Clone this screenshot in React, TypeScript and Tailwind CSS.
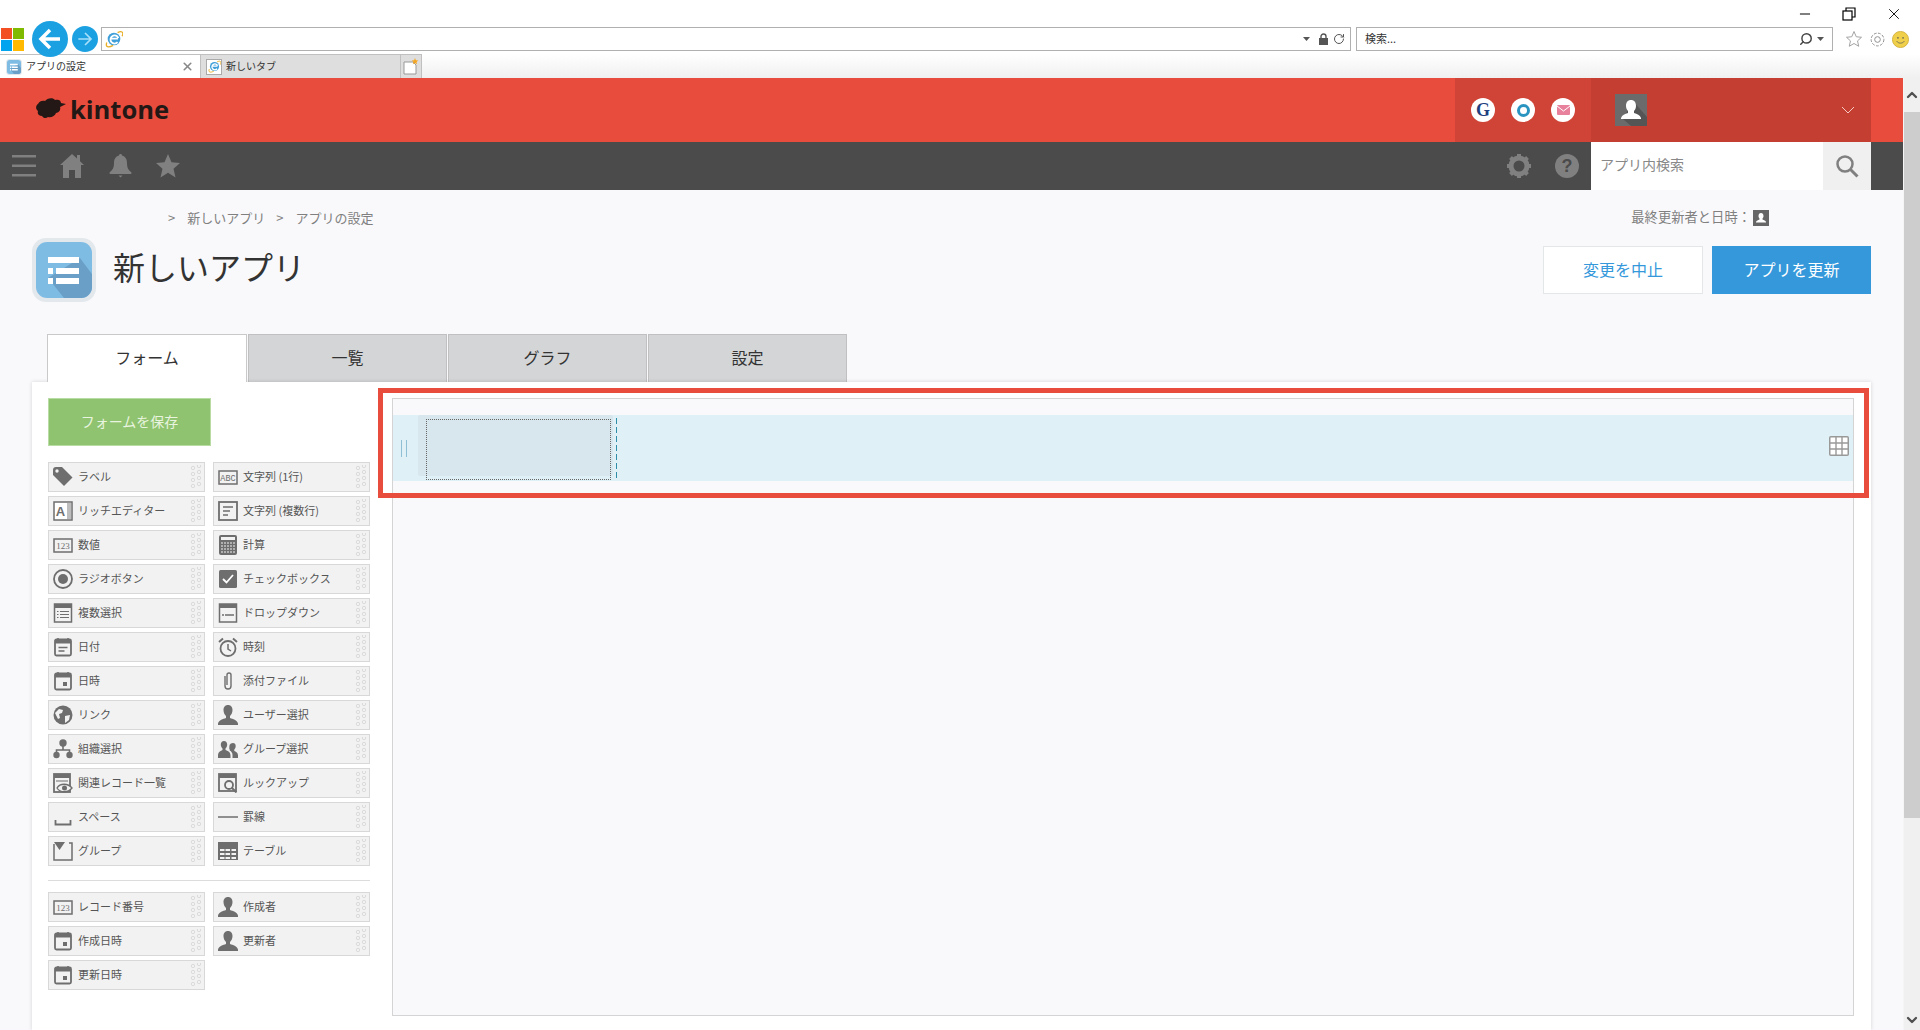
import React from 'react';
import { ChevronDown, ChevronUp, RotateCw, Search, X, Minus } from 'lucide-react';

const GRAY = '#6e6e6e';

const Ic: React.FC<{ name: string }> = ({ name }) => {
  const body = () => {
    switch (name) {
      case 'tag':
        return <><path d="M0 3a3 3 0 0 1 3-3h6l10.500 10.500-8.500 8.500L0 8z" fill={GRAY} transform="translate(0 0)" /><circle cx="4" cy="4" r="1.700" fill="#f2f2f2" /></>;
      case 'abc':
        return <><rect x="1" y="4" width="18" height="13" fill="#f2f2f2" stroke={GRAY} strokeWidth="1.500" /><text x="10" y="14" textAnchor="middle" fontSize="8.500" fontFamily="Liberation Mono" fill={GRAY}>ABC</text></>;
      case 'num':
        return <><rect x="1" y="4" width="18" height="13" fill="#f2f2f2" stroke={GRAY} strokeWidth="1.500" /><text x="10" y="14" textAnchor="middle" fontSize="9" fontFamily="Liberation Serif" fill={GRAY}>123</text></>;
      case 'rich':
        return <><rect x="1" y="1" width="18" height="18" fill="#fff" stroke={GRAY} strokeWidth="1.500" /><rect x="14" y="2" width="4" height="16" fill="#bdbdbd" /><text x="7.500" y="15" textAnchor="middle" fontSize="13" fontWeight="700" fontFamily="Liberation Sans" fill={GRAY}>A</text></>;
      case 'multi':
        return <><rect x="1" y="1" width="18" height="18" fill="#f2f2f2" stroke={GRAY} strokeWidth="1.800" /><path d="M5 6h10M5 10h7M5 14h5" stroke={GRAY} strokeWidth="1.500" /></>;
      case 'calc':
        return <><rect x="1" y="0" width="18" height="20" rx="2" fill={GRAY} /><rect x="3" y="2" width="14" height="3" fill="#f2f2f2" /><path d="M3 8h14M3 11h14M3 14h14M3 17h14" stroke="#f2f2f2" strokeWidth="1.200" strokeDasharray="2 1" /></>;
      case 'radio':
        return <><circle cx="10" cy="10" r="9" fill="#f2f2f2" stroke={GRAY} strokeWidth="1.800" /><circle cx="10" cy="10" r="5" fill={GRAY} /></>;
      case 'check':
        return <><rect x="1" y="1" width="18" height="18" rx="1.500" fill={GRAY} /><path d="M5 10l3.500 3.500L15 6" fill="none" stroke="#fff" strokeWidth="1.800" /></>;
      case 'mselect':
        return <><rect x="1.500" y="1" width="17" height="18" fill="#f2f2f2" stroke={GRAY} strokeWidth="1.500" /><rect x="1.500" y="1" width="17" height="4" fill={GRAY} /><path d="M4 8.500h1.500M7 8.500h9M4 11.500h1.500M7 11.500h9M4 14.500h1.500M7 14.500h9" stroke={GRAY} strokeWidth="1.200" /></>;
      case 'dropdown':
        return <><rect x="1.500" y="1" width="17" height="18" fill="#f2f2f2" stroke={GRAY} strokeWidth="1.500" /><rect x="1.500" y="1" width="17" height="4" fill={GRAY} /><path d="M4 12h2M7 12h9" stroke={GRAY} strokeWidth="1.500" /></>;
      case 'date':
        return <><rect x="2" y="2.500" width="16" height="16" rx="1.500" fill="#f2f2f2" stroke={GRAY} strokeWidth="1.800" /><path d="M2 3h16v3.500H2z" fill={GRAY} /><path d="M5 1v3M15 1v3" stroke={GRAY} strokeWidth="1.500" /><path d="M5.500 10.500h9M5.500 14h6" stroke={GRAY} strokeWidth="1.500" /></>;
      case 'datetime':
        return <><rect x="2" y="2.500" width="16" height="16" rx="1.500" fill="#f2f2f2" stroke={GRAY} strokeWidth="1.800" /><path d="M2 3h16v3.500H2z" fill={GRAY} /><path d="M5 1v3M15 1v3" stroke={GRAY} strokeWidth="1.500" /><rect x="10" y="11" width="4" height="4" fill={GRAY} /></>;
      case 'clock':
        return <><circle cx="10" cy="11.500" r="7.500" fill="#f2f2f2" stroke={GRAY} strokeWidth="1.800" /><path d="M10 7v5l3 2" fill="none" stroke={GRAY} strokeWidth="1.500" /><path d="M1 5l4-3.500M19 5l-4-3.500" stroke={GRAY} strokeWidth="2" /></>;
      case 'clip':
        return <path d="M7 5v10a3 3 0 0 0 6 0V4a2 2 0 0 0-4 0v10" fill="none" stroke={GRAY} strokeWidth="1.400" />;
      case 'globe':
        return <><circle cx="10" cy="10" r="9.500" fill={GRAY} /><path d="M2 8l4-4 4 1-1 3-3 1 1 4-2 1zM12 11l5-1-1 5-4 3z" fill="#f2f2f2" /></>;
      case 'user':
        return <path d="M10 0c3 0 4.500 2.300 4.500 5 0 2.500-1 4.500-2.500 6v2c3 1 7 2 8 5.500V20H0v-1.500C1 15 5 14 8 13v-2C6.500 9.500 5.500 7.500 5.500 5 5.500 2.300 7 0 10 0z" fill={GRAY} />;
      case 'org':
        return <><circle cx="10" cy="4" r="3.700" fill={GRAY} /><circle cx="3.500" cy="16" r="3.200" fill={GRAY} /><circle cx="16.500" cy="16" r="3.200" fill={GRAY} /><path d="M10 7v4M3.500 14v-3h13v3" fill="none" stroke={GRAY} strokeWidth="1.600" /></>;
      case 'group':
        return <><path d="M6 2c2 0 3.200 1.500 3.200 3.600 0 1.800-.7 3-1.700 4v1.400c2 .8 4.500 1.500 5 5V19H0v-3c.5-3.500 3-4.200 4.500-5V9.600c-1-1-1.700-2.200-1.700-4C2.800 3.500 4 2 6 2z" fill={GRAY} /><path d="M15 4c1.700 0 2.700 1.300 2.700 3 0 1.500-.6 2.600-1.400 3.500V12c1.500.6 3.300 1.200 3.700 4v3h-5.500v-3c0-2-1-3.500-2.800-4.500V10.500C11 9.600 11.400 8.500 11.400 7 11.400 5.300 13.300 4 15 4z" fill={GRAY} /></>;
      case 'related':
        return <><rect x="1" y="1" width="16" height="18" fill="#f2f2f2" stroke={GRAY} strokeWidth="1.800" /><rect x="1" y="1" width="16" height="4" fill={GRAY} /><path d="M3 8h12" stroke={GRAY} strokeWidth="1" /><path d="M4 15c3-5 11-5 15 0-4 5-12 5-15 0z" fill="#f2f2f2" stroke={GRAY} strokeWidth="1.300" /><circle cx="11.500" cy="15" r="2.500" fill={GRAY} /></>;
      case 'lookup':
        return <><rect x="1" y="1" width="17" height="17" fill="#f2f2f2" stroke={GRAY} strokeWidth="1.800" /><rect x="1" y="1" width="17" height="4" fill={GRAY} /><circle cx="11" cy="12" r="4" fill="#f2f2f2" stroke={GRAY} strokeWidth="1.800" /><path d="M14 15l4.500 4.500" stroke={GRAY} strokeWidth="2" /></>;
      case 'space':
        return <path d="M2.500 13v4.500h15V13" fill="none" stroke={GRAY} strokeWidth="1.800" />;
      case 'line':
        return <path d="M0 10h20" stroke={GRAY} strokeWidth="1.500" />;
      case 'groupbox':
        return <><path d="M1 3v16h18V2h-3" fill="none" stroke={GRAY} strokeWidth="1.500" /><path d="M1 1h11l-5.500 8z" fill={GRAY} /></>;
      case 'table':
        return <><rect x="0" y="1" width="20" height="18" fill={GRAY} /><path d="M2 8h4.500v2H2zM7.500 8H12v2H7.500zM13.500 8H18v2h-4.500zM2 12h4.500v2H2zM7.500 12H12v2H7.500zM13.500 12H18v2h-4.500zM2 16h4.500v2H2zM7.500 16H12v2H7.500zM13.500 16H18v2h-4.500z" fill="#f2f2f2" /></>;
      default:
        return null;
    }
  };
  return <svg viewBox="0 0 20 20" className="w-5 h-5 shrink-0">{body()}</svg>;
};

const DragDots = () => (
  <svg width="12" height="24" viewBox="0 0 12 24" className="ml-auto mr-[2px] shrink-0">
    {[3, 9, 15, 21].map(y => <circle key={y} cx="3" cy={y} r="1.700" fill="none" stroke="#d4d4d4" strokeWidth="0.800" />)}
    {[1, 7, 13, 19].map(y => <circle key={y} cx="9" cy={y} r="1.700" fill="none" stroke="#d4d4d4" strokeWidth="0.800" />)}
  </svg>
);

const Field: React.FC<{ icon: string; label: string }> = ({ icon, label }) => (
  <div className="h-[30px] w-[157px] flex items-center pl-[4px] bg-[#f2f2f2] border border-[#d8d8d8] text-[11px] text-[#555] whitespace-nowrap">
    <Ic name={icon} />
    <span className="ml-[5px] -mt-[2px]">{label}</span>
    <DragDots />
  </div>
);

const fields = [
  ['tag', 'ラベル'], ['abc', '文字列 (1行)'],
  ['rich', 'リッチエディター'], ['multi', '文字列 (複数行)'],
  ['num', '数値'], ['calc', '計算'],
  ['radio', 'ラジオボタン'], ['check', 'チェックボックス'],
  ['mselect', '複数選択'], ['dropdown', 'ドロップダウン'],
  ['date', '日付'], ['clock', '時刻'],
  ['datetime', '日時'], ['clip', '添付ファイル'],
  ['globe', 'リンク'], ['user', 'ユーザー選択'],
  ['org', '組織選択'], ['group', 'グループ選択'],
  ['related', '関連レコード一覧'], ['lookup', 'ルックアップ'],
  ['space', 'スペース'], ['line', '罫線'],
  ['groupbox', 'グループ'], ['table', 'テーブル'],
];

const sysFields = [
  ['num', 'レコード番号'], ['user', '作成者'],
  ['datetime', '作成日時'], ['user', '更新者'],
  ['datetime', '更新日時'],
];

const IeLogo: React.FC<{ size: number }> = ({ size }) => (
  <svg width={size} height={size} viewBox="0 0 20 20">
    <circle cx="10" cy="10" r="7" fill="#3f9fd8" />
    <path d="M5.500 9.500h9M14 13.500a4.500 4.500 0 1 1 .8-4.500" fill="none" stroke="#fff" strokeWidth="2" />
    <path d="M2 14C0 19 4 20 9 17M14 3c5-3 7 0 5 4" fill="none" stroke="#e8b02a" strokeWidth="1.500" />
  </svg>
);

const AppIcon: React.FC<{ size: number }> = ({ size }) => (
  <svg width={size} height={size} viewBox="0 0 64 64">
    <rect x="0" y="0" width="64" height="64" rx="14" fill="#e3e8ec" />
    <rect x="4" y="4" width="56" height="56" rx="11" fill="#7fbce4" />
    <path d="M16 40L48 20l12 16v13a11 11 0 0 1-11 11H32z" fill="#6aa0c8" />
    <path d="M16 19h31v6H16zM16 30h5v6h-5zM24 30h23v6H24zM16 40h5v6h-5zM24 40h23v6H24z" fill="#fff" />
  </svg>
);

export default function App() {
  return (
    <div className="w-[1920px] h-[1030px] overflow-hidden flex flex-col bg-white font-['Noto_Sans_CJK_JP','Noto_Sans',sans-serif]">
      {/* browser chrome */}
      <div className="h-[78px] shrink-0 flex flex-col bg-white">
        <div className="h-[27px] flex items-center justify-end pr-[17px] gap-[29px] text-black">
          <Minus className="w-4 h-4" strokeWidth={1.500} />
          <svg width="14" height="14" viewBox="0 0 14 14" fill="none" stroke="#000" strokeWidth="1.200"><rect x="1" y="4" width="9" height="9" /><path d="M4 4V1h9v9h-3" /></svg>
          <X className="w-[18px] h-[18px]" strokeWidth={1.200} />
        </div>
        <div className="h-[24px] flex items-center">
          <div className="ml-px w-[23px] h-[23px] grid grid-cols-2 gap-px shrink-0">
            <div className="bg-[#f25022]" />
            <div className="bg-[#7fba00]" />
            <div className="bg-[#00a4ef]" />
            <div className="bg-[#ffb900]" />
          </div>
          <div className="ml-[8px] w-9 h-9 -mt-px rounded-full bg-[#1ba1e2] flex items-center justify-center shrink-0 z-10">
            <svg width="24" height="24" viewBox="0 0 24 24" fill="none" stroke="#fff" strokeWidth="3.500"><path d="M22 12H4M12 3l-9 9 9 9" /></svg>
          </div>
          <div className="ml-[4px] w-[26px] h-[26px] rounded-full bg-[#1ba1e2] flex items-center justify-center shrink-0">
            <svg width="16" height="16" viewBox="0 0 24 24" fill="none" stroke="#a8e0fa" strokeWidth="2.500"><path d="M2 12h19M12 3l9 9-9 9" /></svg>
          </div>
          <div className="ml-[3px] w-[1250px] h-[24px] border border-[#b0b0b0] flex items-center pl-[3px] pr-[5px] shrink-0">
            <IeLogo size={18} />
            <svg className="ml-auto" width="7" height="4" viewBox="0 0 7 4"><path d="M0 0h7L3.500 4z" fill="#555" /></svg>
            <svg className="ml-[8px]" width="11" height="12" viewBox="0 0 11 12"><path d="M3 5V3.500a2.500 2.500 0 0 1 5 0V5" fill="none" stroke="#555" strokeWidth="1.400" /><rect x="1" y="5" width="9" height="7" fill="#555" /></svg>
            <RotateCw className="ml-[4px] w-3 h-3 text-[#555]" />
          </div>
          <div className="ml-[5px] w-[477px] h-[24px] border border-[#b0b0b0] flex items-center pl-[8px] pr-[8px] text-[11px] text-[#333] shrink-0">
            <span className="-mt-[2px]">検索...</span>
            <Search className="ml-auto w-[14px] h-[14px] text-[#444] -scale-x-100" strokeWidth={2.500} />
            <svg className="ml-[4px]" width="7" height="4" viewBox="0 0 7 4"><path d="M0 0h7L3.500 4z" fill="#555" /></svg>
          </div>
          <svg className="ml-[12px] shrink-0" width="18" height="18" viewBox="0 0 24 24" fill="none" stroke="#a0a0a0" strokeWidth="1.300"><path d="M12 2l3 7 7 .7-5.300 4.800 1.600 7.200L12 18l-6.300 3.700 1.600-7.200L2 9.700 9 9z" /></svg>
          <svg className="ml-[6px] shrink-0" width="17" height="17" viewBox="0 0 24 24" fill="none" stroke="#909090" strokeWidth="1.400"><circle cx="12" cy="12" r="4" /><circle cx="12" cy="12" r="9" strokeDasharray="4 2" /></svg>
          <svg className="ml-[6px] shrink-0" width="17" height="17" viewBox="0 0 20 20"><circle cx="10" cy="10" r="9.500" fill="#f0cf4a" stroke="#d0ae38" /><circle cx="7" cy="8" r="1" fill="#665" /><circle cx="13" cy="8" r="1" fill="#665" /><path d="M5.500 12c2 3 7 3 9 0" fill="none" stroke="#665" /></svg>
        </div>
        <div className="mt-[3px] h-[24px] flex text-[10px] text-[#333] bg-gradient-to-b from-white to-[#f0f0f0]">
          <div className="w-[200px] bg-white border-t border-[#c0c0c0] flex items-center pl-[6px] pr-[6px]">
            <AppIcon size={16} />
            <span className="ml-[4px] -mt-[2px]">アプリの設定</span>
            <X className="ml-auto w-[13px] h-[13px] text-[#888]" strokeWidth={3} />
          </div>
          <div className="w-[200px] bg-[#dedede] border-t border-l border-[#c0c0c0] flex items-center pl-[5px]">
            <div className="w-[16px] h-[16px] bg-white border border-[#aaa] flex items-center justify-center"><IeLogo size={13} /></div>
            <span className="ml-[4px] -mt-[2px]">新しいタブ</span>
          </div>
          <div className="w-[22px] bg-[#dedede] border-t border-x border-[#c0c0c0] flex items-center justify-center">
            <svg width="16" height="17" viewBox="0 0 16 17"><path d="M1 4h9l3 3v9H1z" fill="#fff" stroke="#999" /><path d="M12 0l.9 2.300 2.400.2-1.800 1.500.6 2.300-2.100-1.300-2.100 1.300.6-2.300-1.800-1.500 2.400-.2z" fill="#f5a623" /></svg>
          </div>
        </div>
      </div>

      <div className="flex-1 flex min-h-0">
        <div className="w-[1903px] flex flex-col bg-[#f9f9fb] min-h-0">
          {/* kintone header */}
          <div className="h-[64px] shrink-0 bg-[#e74c3c] flex items-center pl-[35px] pr-[32px]">
            <svg width="31" height="24" viewBox="0 0 31 24" className="shrink-0">
              <path d="M3 6c1-3 5-4 7-3 2-3 8-4 10-1 3-1 6 0 6 3l5 1-6 3c1 3-1 6-4 6-1 3-5 5-8 4-2 2-5 1-6-1-3 0-5-2-4-5-3-2-2-6 0-7z" fill="#231815" />
            </svg>
            <span className="ml-[4px] font-['Open_Sans'] font-bold text-[25.5px] leading-none text-[#231815]">kintone</span>
            <div className="ml-auto w-[136px] h-full bg-[#cf4436] flex items-center pl-[16px] gap-[16px]">
              <div className="w-6 h-6 rounded-full bg-white flex items-center justify-center font-['Liberation_Serif'] font-bold text-[18px] text-[#1f3f7f]">G</div>
              <div className="w-6 h-6 rounded-full bg-white flex items-center justify-center">
                <div className="w-[13px] h-[13px] rounded-full border-[3px] border-[#2a94c0]" />
              </div>
              <div className="w-6 h-6 rounded-full bg-white flex items-center justify-center">
                <svg width="13" height="10" viewBox="0 0 13 10"><rect width="13" height="10" rx="1" fill="#e8819c" /><path d="M0 1l6.500 5L13 1" fill="none" stroke="#fff" /></svg>
              </div>
            </div>
            <div className="w-[280px] h-full bg-[#c43f31] flex items-center pl-[24px] pr-[16px]">
              <svg width="32" height="32" viewBox="0 0 32 32">
                <rect width="32" height="32" fill="#6b6b6b" />
                <path d="M18 7l14 16v9H16L8 25z" fill="#555" />
                <path d="M16 6c3 0 5 2 5 6 0 2-1 4-2 5v2c3 1 6 2 7 5v1H6v-1c1-3 4-4 7-5v-2c-1-1-2-3-2-5 0-4 2-6 5-6z" fill="#fff" />
              </svg>
              <svg className="ml-auto" width="14" height="8" viewBox="0 0 14 8"><path d="M1 1l6 6 6-6" fill="none" stroke="#f5c9c2" strokeWidth="1" /></svg>
            </div>
          </div>

          {/* dark nav */}
          <div className="h-[48px] shrink-0 bg-[#4b4b4b] flex items-center pl-[12px] pr-[32px] text-[#808080]">
            <svg width="24" height="24" viewBox="0 0 24 24" fill="#808080"><path d="M0 1h24v2.500H0zM0 10.500h24V13H0zM0 20h24v2.500H0z" /></svg>
            <svg className="ml-[24px]" width="24" height="24" viewBox="0 0 24 24" fill="#808080"><path d="M12 0l5 4.500V1h3v6.300l4 3.700h-3v13h-6v-8H9v8H3V11H0z" /></svg>
            <svg className="ml-[25px]" width="23" height="24" viewBox="0 0 23 24" fill="#808080"><path d="M11.500 0c1 0 1.500.700 1.500 1.500 3.500 1 5 4 5 7.500 0 5 1.500 7 4 9 1 1 .5 2-.5 2h-20c-1 0-1.500-1-.5-2 2.500-2 4-4 4-9 0-3.500 1.500-6.500 5-7.500C10 .700 10.500 0 11.500 0zM9.500 21.500h4L11.500 23.500z" /></svg>
            <svg className="ml-[24px]" width="24" height="24" viewBox="0 0 24 24" fill="#808080"><path d="M12 0l3.500 8.300 8.500.7-6.500 5.700 2 8.800L12 18.800 4.500 23.500l2-8.800L0 9l8.500-.7z" /></svg>

            <svg className="ml-auto" width="24" height="24" viewBox="0 0 24 24">
              <circle cx="12" cy="12" r="8" fill="none" stroke="#808080" strokeWidth="5" />
              <path d="M10 0h4v4h-4zM10 20h4v4h-4zM0 10h4v4H0zM20 10h4v4h-4z" fill="#808080" />
              <path d="M10 0h4v4h-4zM10 20h4v4h-4zM0 10h4v4H0zM20 10h4v4h-4z" fill="#808080" transform="rotate(45 12 12)" />
            </svg>
            <div className="ml-[24px] w-6 h-6 rounded-full bg-[#808080] flex items-center justify-center text-[#4b4b4b] font-['Liberation_Sans'] font-bold text-[18px]">?</div>
            <div className="ml-[12px] w-[232px] h-full bg-white flex items-center pl-[9px] pb-[3px] text-[14px] text-[#888]">アプリ内検索</div>
            <div className="w-[48px] h-full bg-[#f0f0f0] flex items-center justify-center">
              <svg width="24" height="24" viewBox="0 0 24 24" fill="none" stroke="#808080"><circle cx="10" cy="10" r="7.500" strokeWidth="2.500" /><path d="M15.500 15.500l7 7" strokeWidth="3" /></svg>
            </div>
          </div>

          {/* page head */}
          <div className="flex-1 min-h-0 flex flex-col px-[32px]">
            <div className="mt-[19px] h-[17px] flex items-center text-[13px] text-[#808080] leading-none whitespace-nowrap">
              <span className="ml-[136px]">&gt;</span>
              <span className="ml-[12px]">新しいアプリ</span>
              <span className="ml-[11px]">&gt;</span>
              <span className="ml-[12px]">アプリの設定</span>
              <span className="ml-auto -mt-[2px] text-[13.3px]">最終更新者と日時：</span>
              <svg className="ml-[2px] mr-[102px]" width="16" height="16" viewBox="0 0 16 16"><rect width="16" height="16" fill="#666" /><path d="M8 3c1.500 0 2.500 1 2.500 3 0 1-.5 2-1 2.500v1c1.500.5 3 1 3.500 2.500v.5H3V12c.5-1.500 2-2 3.500-2.500v-1C6 8 5.500 7 5.500 6c0-2 1-3 2.500-3z" fill="#fff" /></svg>
            </div>
            <div className="mt-[12px] h-[64px] flex items-center shrink-0">
              <AppIcon size={64} />
              <h1 className="ml-[17px] text-[32px] font-normal text-[#333] leading-none -mt-[9px]">新しいアプリ</h1>
              <button className="ml-auto w-[160px] h-[48px] bg-white border border-[#e3e7e8] text-[#3498db] text-[16px] pb-[3px]">変更を中止</button>
              <button className="ml-[9px] w-[159px] h-[48px] bg-[#3498db] text-white text-[16px] pb-[3px]">アプリを更新</button>
            </div>

            <div className="mt-[32px] ml-[15px] h-[48px] flex shrink-0 text-[16px] text-[#333]">
              <div className="w-[200px] pb-[3px] bg-white border-x border-t border-[#c9c9c9] flex items-center justify-center relative z-10">フォーム</div>
              <div className="ml-px w-[199px] pb-[3px] bg-[#d4d5d7] border-t border-x border-[#c0c0c0] flex items-center justify-center">一覧</div>
              <div className="ml-px w-[199px] pb-[3px] bg-[#d4d5d7] border-t border-x border-[#c0c0c0] flex items-center justify-center">グラフ</div>
              <div className="ml-px w-[199px] pb-[3px] bg-[#d4d5d7] border-t border-x border-[#c0c0c0] flex items-center justify-center">設定</div>
            </div>

            {/* form card */}
            <div className="relative flex-1 min-h-0 flex bg-white pl-[16px] pr-[17px] pt-[16px] pb-[14px] shadow-[0_0_4px_rgba(0,0,0,0.15)]">
              <div className="w-[322px] shrink-0">
                <button className="w-[163px] h-[48px] pb-[2px] bg-[#8fc36f] border border-[#b9dba4] text-[14px] text-[#e8f4df]">フォームを保存</button>
                <div className="mt-[16px] grid grid-cols-[157px_157px] gap-x-[8px] gap-y-[4px]">
                  {fields.map(([icon, label]) => <Field key={label} icon={icon} label={label} />)}
                </div>
                <div className="mt-[14px] mb-[11px] border-t border-[#dcdcdc]" />
                <div className="grid grid-cols-[157px_157px] gap-x-[8px] gap-y-[4px]">
                  {sysFields.map(([icon, label]) => <Field key={label} icon={icon} label={label} />)}
                </div>
              </div>

              <div className="ml-[22px] flex-1 border border-[#d4d4d4] bg-[#f9f9fb] pt-[16px]">
                <div className="h-[66px] bg-[#dff1f7] flex items-start relative">
                  <div className="w-[25px] h-full flex items-center justify-start pl-[8px] gap-[4px]">
                    <div className="w-px h-[17px] bg-[#8fbfd5]" />
                    <div className="w-px h-[17px] bg-[#8fbfd5]" />
                  </div>
                  <div className="relative w-[195px] h-[61px] bg-[#d8e7ed] rounded-[2px]">
                    <div className="absolute left-[8px] top-[4px] w-[185px] h-[61px] border border-dotted border-[#666]" />
                  </div>
                  <div className="ml-[3px] mt-[3px] w-px h-[63px] bg-[repeating-linear-gradient(to_bottom,#2f8fa8_0,#2f8fa8_6px,transparent_6px,transparent_9px)]" />
                  <svg className="ml-auto mr-[4px] mt-[21px]" width="20" height="20" viewBox="0 0 20 20">
                    <rect x="0.750" y="0.750" width="18.500" height="18.500" rx="1" fill="#fff" stroke="#999" strokeWidth="1.500" />
                    <path d="M0 7h20M0 13h20M7 0v20M13 0v20" stroke="#999" strokeWidth="1.400" />
                  </svg>
                </div>
              </div>

              {/* red annotation frame */}
              <div className="absolute left-[346px] top-[6px] w-[1491px] h-[110px] border-[5px] border-[#e74c3c] pointer-events-none" />
            </div>
          </div>
        </div>

        {/* scrollbar */}
        <div className="w-[17px] shrink-0 bg-[#f0f0f0] flex flex-col items-center border-l border-[#f5f5f5]">
          <ChevronUp className="w-4 h-[34px] text-[#505050]" strokeWidth={3.500} />
          <div className="w-full h-[706px] bg-[#cdcdcd]" />
          <ChevronDown className="mt-auto w-4 h-[20px] text-[#505050]" strokeWidth={3.500} />
        </div>
      </div>
    </div>
  );
}
